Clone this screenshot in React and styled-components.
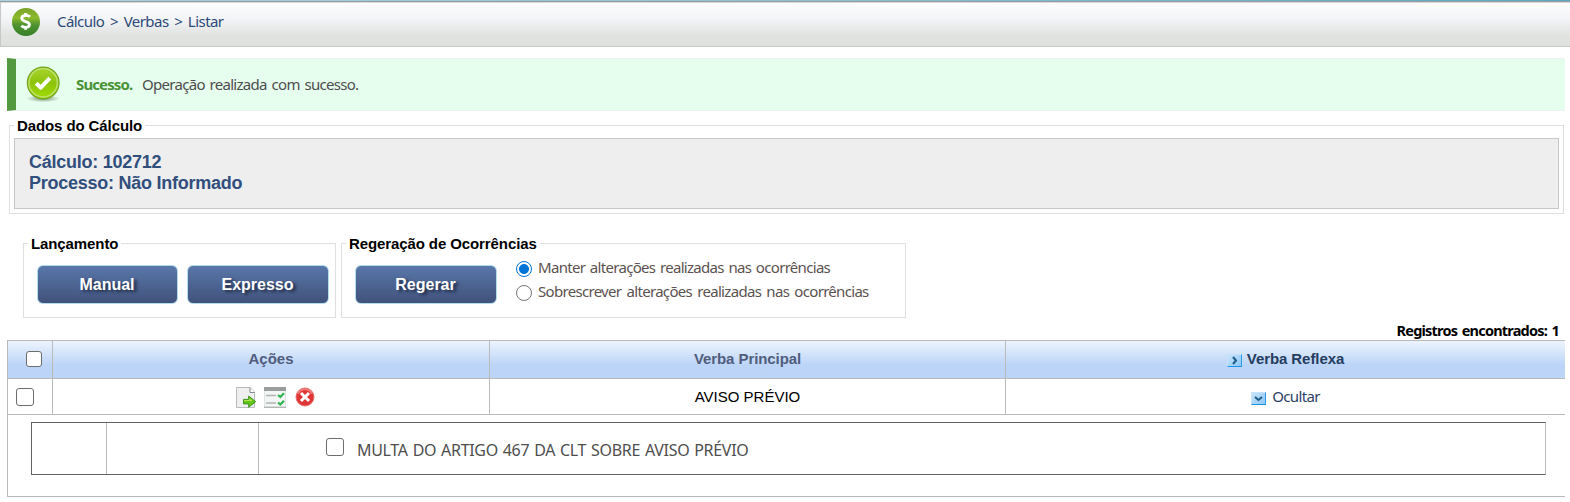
import React from 'react';
import styled, { createGlobalStyle } from 'styled-components';

const tahoma = '"Noto Sans", "Open Sans", sans-serif';
const arial = '"Liberation Sans", Arial, sans-serif';

const GlobalStyle = createGlobalStyle`
  * { box-sizing: border-box; }
  body { margin: 0; background: #fff; font: 15px/20px ${arial}; overflow: hidden; }
`;

const Page = styled.div`
  width: 1570px;
  height: 502px;
  overflow: hidden;
`;
const TopStrip = styled.div`
  height: 2px;
  background: linear-gradient(90deg, #a9d3df, #8dc2d3 50%, #5fa7c4);
  border-bottom: 1px solid #989c9e;
`;
const Breadcrumb = styled.header`
  display: flex;
  height: 45px;
  padding: 4px 0 0 10px;
  border: 1px solid #c6c8c8;
  border-right: 0;
  border-top-color: #d8dadb;
  background: linear-gradient(#fdfdfe, #f4f5f8 35%, #e1e3e1 75%, #dfe1df);
  svg { flex: none; }
`;
const Crumbs = styled.nav`
  margin: 4px 0 0 17px;
  color: #2c4a78;
  font: 15px/20px ${tahoma};
  letter-spacing: -0.55px;
  word-spacing: 2.3px;
  white-space: pre;
`;
const Alert = styled.section`
  display: flex;
  width: 1558px;
  height: 53px;
  margin: 11px 0 0 7px;
  padding: 7px 0 0 9px;
  border: 1px solid #e9f1f1;
  border-left: 9px solid #53993f;
  border-right: 0;
  background: #e6feee;
  color: #4d4d4d;
  font: 15px/20px ${tahoma};
  svg { flex: none; }
`;
const AlertTitle = styled.strong`
  margin: 8px 0 0 16px;
  width: 66px;
  color: #489335;
  letter-spacing: -0.88px;
`;
const AlertText = styled.span`
  margin-top: 8px;
  letter-spacing: -0.7px;
  word-spacing: 1.5px;
`;
const Group = styled.fieldset`
  display: flex;
  flex: none;
  width: ${(p) => p.$w}px;
  height: ${(p) => p.$h}px;
  margin: 0;
  padding: ${(p) => p.$pad};
  border: 1px solid #dfdfdf;
  min-width: 0;
`;
const GroupTitle = styled.legend`
  height: 17px;
  margin-left: ${(p) => p.$shift || 0}px;
  padding: 0 3px;
  color: #000;
  font: bold 15px/17px ${arial};
  letter-spacing: -0.1px;
`;
const DataArea = styled.div`
  padding: 6px 0 0 9px;
`;
const DataBox = styled.div`
  flex: 1;
  height: 71px;
  padding: 13px 14px;
  border: 1px solid #c8c8c8;
  background: #eee;
  color: #314f7c;
  font: bold 18px/21px ${arial};
  letter-spacing: -0.25px;
`;
const Controls = styled.div`
  display: flex;
  gap: 5px;
  padding: 21px 0 0 23px;
`;
const Button = styled.button`
  width: ${(p) => p.$w || 141}px;
  height: 39px;
  margin-right: ${(p) => p.$gap || 0}px;
  padding: 0 1px 0 0;
  border: 1px solid #b0dcec;
  border-radius: 6px;
  background: linear-gradient(#5877a9, #41527b);
  color: #fff;
  font: bold 16px/20px ${arial};
  text-shadow: 3px 2px 3px #202b45;
`;
const Radios = styled.div`
  display: flex;
  flex-direction: column;
  gap: 8px;
  margin-top: -4px;
`;
const RadioLabel = styled.label`
  display: flex;
  height: 16px;
  gap: 6px;
  color: #5c5251;
  font: 15px/13px ${tahoma};
  letter-spacing: -0.69px;
  word-spacing: ${(p) => p.$words}px;
  white-space: nowrap;
`;
const Radio = styled.input.attrs({ type: 'radio' })`
  appearance: none;
  flex: none;
  width: 16px;
  height: 16px;
  margin: 0;
  border: 1px solid ${(p) => (p.defaultChecked ? '#0075d8' : '#767676')};
  border-width: ${(p) => (p.defaultChecked ? '1.6px' : '1px')};
  border-radius: 50%;
  background: ${(p) => (p.defaultChecked ? 'radial-gradient(#0075d8 4.6px, #fff 5.3px)' : '#fff')};
`;
const Count = styled.div`
  width: 1559px;
  height: 20px;
  margin-top: 2px;
  color: #000;
  text-align: right;
  font: bold 14.5px/20px ${tahoma};
  letter-spacing: -0.8px;
  word-spacing: 1.6px;
`;
const Table = styled.div`
  width: 1558px;
  height: 157px;
  margin-left: 7px;
  border: 1px solid #bababa;
  border-right: 0;
`;
const Row = styled.div`
  display: grid;
  grid-template-columns: 45px 437px 516px 1fr;
  height: ${(p) => (p.$head ? 38 : 36)}px;
  border-bottom: 1px solid #bababa;
  background: ${(p) => (p.$head ? 'linear-gradient(#edf4fe, #bbd4f7 66%, #bdd5f7)' : '#fff')};
  font-weight: ${(p) => (p.$head ? 'bold' : 'normal')};
`;
const Cell = styled.div`
  display: flex;
  align-items: center;
  justify-content: ${(p) => (p.$left ? 'flex-start' : 'center')};
  padding: ${(p) => p.$pad || '0'};
  gap: ${(p) => p.$gap || 0}px;
  border-right: 1px solid #bababa;
  color: ${(p) => p.$color || '#000'};
  font-size: 15px;
  font-family: ${(p) => (p.$soft ? tahoma : arial)};
  letter-spacing: ${(p) => p.$track || '0'};
  &:last-child { border-right: 0; }
`;
const Check = styled.input.attrs({ type: 'checkbox' })`
  appearance: none;
  flex: none;
  width: ${(p) => p.$size}px;
  height: ${(p) => p.$size}px;
  margin: 0;
  border: 1px solid #6d6d6d;
  border-radius: 3px;
  background: #fff;
`;
const Toggle = styled.span`
  display: flex;
  align-items: center;
  justify-content: center;
  width: 15px;
  height: 13px;
  margin-top: 4px;
  border: 1px solid #c5e2fa;
  border-right-color: #2b9be8;
  border-bottom-color: #1995e8;
  background: linear-gradient(135deg, #c9e4fb, #8cc6f5);
`;
const Nested = styled.div`
  display: grid;
  grid-template-columns: 75px 152px 1fr;
  width: 1515px;
  height: 53px;
  margin: 7px 0 0 23px;
  border: 1px solid #626262;
  border-right-color: #bababa;
`;
const NestedCell = styled.div`
  display: flex;
  border-right: 1px solid #bababa;
  padding: 15px 0 0 67px;
  gap: 13px;
  color: #4e4e4e;
  font: 16px/24px ${tahoma};
  letter-spacing: -0.3px;
  word-spacing: 1px;
  &:last-child { border-right: 0; }
`;

const MoneyIcon = () => (
  <svg width="29" height="29" viewBox="0 0 29 29">
    <defs>
      <linearGradient id="money" x2="0" y2="1">
        <stop stopColor="#7ba329" /><stop offset=".35" stopColor="#8bba2c" />
        <stop offset=".6" stopColor="#4f9330" /><stop offset="1" stopColor="#368028" />
      </linearGradient>
    </defs>
    <circle cx="15" cy="15" r="14" fill="url(#money)" />
    <path d="M19 9.8C17 7.9 10.8 7.6 10.8 11.2c0 4.2 7.6 2.5 7.6 6.4 0 3.5-5.8 3.4-8.1 1.2M14.6 5.9v2.3M14.6 20.5v2.2" fill="none" stroke="#fff" strokeWidth="2.9" />
  </svg>
);
const SuccessIcon = () => (
  <svg width="35" height="37" viewBox="0 0 35 37">
    <defs>
      <linearGradient id="ok" x2="0" y2="1">
        <stop stopColor="#a9d52f" /><stop offset=".5" stopColor="#8cc30b" /><stop offset="1" stopColor="#a2de00" />
      </linearGradient>
      <radialGradient id="okShadow">
        <stop stopColor="#405838" stopOpacity=".65" /><stop offset="1" stopColor="#405838" stopOpacity="0" />
      </radialGradient>
    </defs>
    <ellipse cx="18" cy="32.6" rx="17" ry="3.6" fill="url(#okShadow)" />
    <circle cx="18.2" cy="17" r="15.9" fill="url(#ok)" stroke="#6fa51c" strokeWidth="1.1" />
    <circle cx="18.2" cy="16.8" r="14.2" fill="none" stroke="#bfe070" strokeWidth="1.4" />
    <path d="M11.2 17.2l4.6 4.5 9-9.6" fill="none" stroke="#fff" strokeWidth="4" strokeLinejoin="round" />
  </svg>
);
const ExportIcon = () => (
  <svg width="20" height="21" viewBox="0 0 20 21">
    <path d="M.5.5h13.7l4.3 4.7v15.3H.5z" fill="#eeefee" stroke="#b7bbbb" />
    <path d="M14 .7v4.8h4.6" fill="#fff" stroke="#858b88" />
    <path d="M7.5 12.4h5.2V9.1l7 5.6-7 5.5v-3.3H7.5z" fill="#62c51b" stroke="#318b12" strokeWidth=".9" />
    <path d="M8 13.1h5.4v-2l3.4 2.9H8z" fill="#b2e64b" />
  </svg>
);
const ListIcon = () => (
  <svg width="22" height="21" viewBox="0 0 22 21">
    <path d="M.5.5h21v20H.5z" fill="#f4f6f5" stroke="#e0e4e1" />
    <path d="M0 0h22v4H0z" fill="#999d9b" />
    <path d="M2 8.5h10M2 16h10" stroke="#aeb4b1" strokeWidth="1.4" />
    <path d="M14 8l2.3 2L20 6.2M14 15.5l2.3 2 3.7-3.8" fill="none" stroke="#2bb650" strokeWidth="2.2" />
    <path d="M0 20.2h22" stroke="#9da39f" />
  </svg>
);
const DeleteIcon = () => (
  <svg width="20" height="20" viewBox="0 0 20 20">
    <circle cx="10" cy="10" r="9" fill="#df3534" stroke="#e87270" />
    <path d="M3 7a7.5 7.5 0 0 1 14 0" fill="none" stroke="#ef7977" strokeWidth="2" />
    <path d="M6 6l8 8M14 6l-8 8" stroke="#fff" strokeWidth="3" />
  </svg>
);
const Chevron = ({ d }) => (
  <svg width="9" height="9" viewBox="0 0 9 9"><path d={d} fill="none" stroke="#1d5c88" strokeWidth="2" /></svg>
);

export default function App() {
  return (
    <Page>
      <GlobalStyle />
      <TopStrip />
      <Breadcrumb>
        <MoneyIcon />
        <Crumbs>Cálculo &gt; Verbas &gt; Listar</Crumbs>
      </Breadcrumb>
      <Alert>
        <SuccessIcon />
        <AlertTitle>Sucesso.</AlertTitle>
        <AlertText>Operação realizada com sucesso.</AlertText>
      </Alert>
      <DataArea>
        <Group $w={1555} $h={97} $pad="4px 4px 0">
          <GroupTitle>Dados do Cálculo</GroupTitle>
          <DataBox>Cálculo: 102712<br />Processo: Não Informado</DataBox>
        </Group>
      </DataArea>
      <Controls>
        <Group $w={313} $h={83} $pad="13px 6px 0 13px">
          <GroupTitle $shift={-9}>Lançamento</GroupTitle>
          <Button $gap={9}>Manual</Button>
          <Button $w={142}>Expresso</Button>
        </Group>
        <Group $w={565} $h={83} $pad="13px 4px 0 13px">
          <GroupTitle $shift={-9}>Regeração de Ocorrências</GroupTitle>
          <Button $w={142} $gap={19}>Regerar</Button>
          <Radios>
            <RadioLabel $words={1.4}><Radio name="mode" defaultChecked />Manter alterações realizadas nas ocorrências</RadioLabel>
            <RadioLabel $words={2}><Radio name="mode" />Sobrescrever alterações realizadas nas ocorrências</RadioLabel>
          </Radios>
        </Group>
      </Controls>
      <Count>Registros encontrados: 1</Count>
      <Table>
        <Row $head>
          <Cell $left $pad="0 0 1px 18px"><Check $size={16} /></Cell>
          <Cell $pad="0 0 2px" $color="#515d7e">Ações</Cell>
          <Cell $pad="0 0 2px" $color="#515d7e" $track="-0.08px">Verba Principal</Cell>
          <Cell $pad="0 0 2px" $color="#243c60" $gap={5} $track="-0.08px"><Toggle><Chevron d="M3 1l3 3.5L3 8" /></Toggle>Verba Reflexa</Cell>
        </Row>
        <Row>
          <Cell $left $pad="0 0 0 8px"><Check $size={18} /></Cell>
          <Cell $gap={8.5} $pad="1px 0 0 8px"><ExportIcon /><ListIcon /><DeleteIcon /></Cell>
          <Cell>AVISO PRÉVIO</Cell>
          <Cell $soft $pad="0 0 1px" $color="#2b4266" $gap={6} $track="-0.65px"><Toggle><Chevron d="M1 3l3.5 3L8 3" /></Toggle>Ocultar</Cell>
        </Row>
        <Nested>
          <NestedCell />
          <NestedCell />
          <NestedCell><Check $size={18} />MULTA DO ARTIGO 467 DA CLT SOBRE AVISO PRÉVIO</NestedCell>
        </Nested>
      </Table>
    </Page>
  );
}
